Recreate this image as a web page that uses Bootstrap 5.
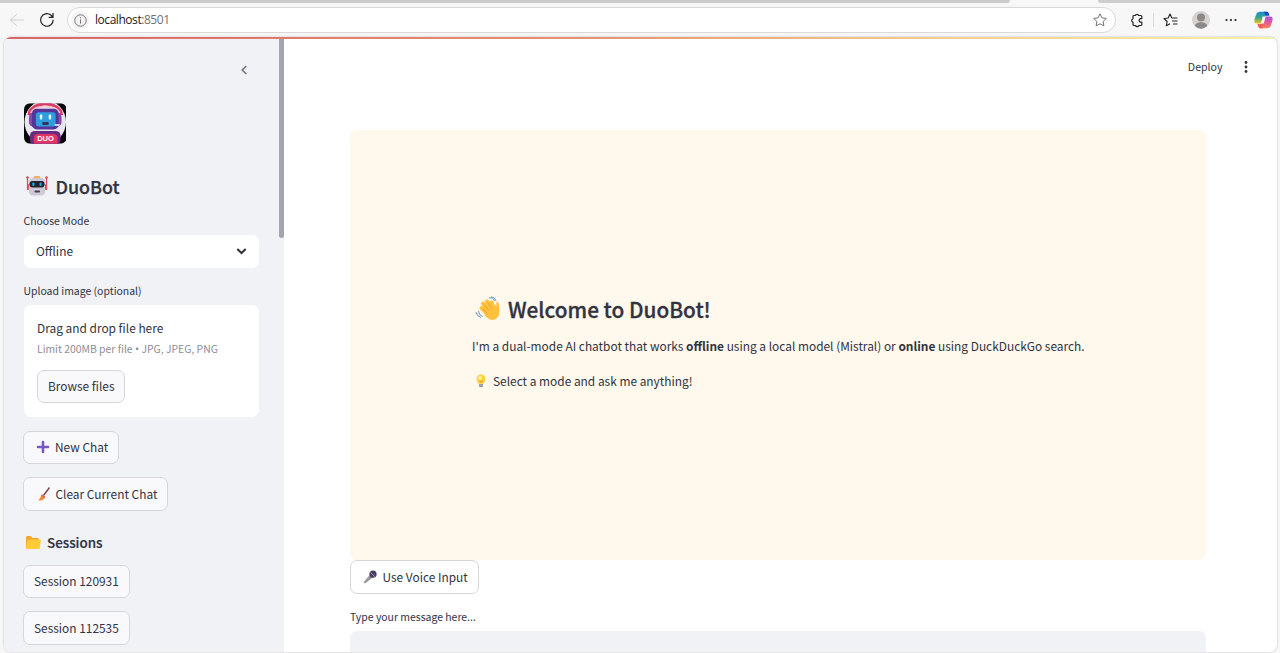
<!DOCTYPE html>
<html lang="en">
<head>
<meta charset="utf-8">
<meta name="viewport" content="width=device-width, initial-scale=1">
<title>DuoBot</title>
<link href="https://cdn.jsdelivr.net/npm/bootstrap@5.3.0/dist/css/bootstrap.min.css" rel="stylesheet">
<script src="https://cdn.jsdelivr.net/npm/bootstrap@5.3.0/dist/js/bootstrap.bundle.min.js" defer></script>
<style>
  body { height: 653px; background: #f7f7f7; color: #31333f; font-family: "Noto Sans CJK SC", sans-serif; font-size: 11.9px; line-height: 20px; }
  svg { display: block; flex: none; }
  .tabstrip { height: 3px; background: #f7f7f7; }
  .tab-rest { background: #cdcdcd; }
  .tab-left { width: 1010px; border-bottom-right-radius: 3px; }
  .tab-right { margin-left: 88px; border-bottom-left-radius: 3px; }
  .toolbar { height: 34px; }
  .address { width: 1049px; height: 26px; border: 1px solid #d9d9d9; margin-left: 12px; padding: 0 8px 0 3px; font: 12px/24px "Open Sans", sans-serif; letter-spacing: -.45px; color: #1b1b1b; }
  .info-dot { width: 18px; height: 18px; background: #f3f3f3; }
  .address-text { margin-left: 6px; }
  .port { color: #717171; }
  .viewport { height: 615px; margin: 0 3px 0 4px; border-radius: 7px; box-shadow: 0 0 2px #b4b4b4; }
  .page-frame { height: 615px; }
  .rainbow { height: 2px; background: linear-gradient(90deg, #d9666a, #e8906e 45%, #f3cf94 75%, #f4f0a8); }
  .sidebar { width: 280px; background: #f0f2f6; padding: 0 25px 0 19.5px; }
  .scroll-thumb { top: 0; right: 0; width: 5px; height: 199px; background: #a3a4ad; border-radius: 0 0 3px 3px; }
  .side-top { height: 64px; padding: 23px 9px 0 0; }
  .title { font-weight: 500; font-size: 17.9px; line-height: 26px; margin-top: 28.5px; gap: 7.5px; padding-left: 2.5px; -webkit-text-stroke: .25px #31333f; }
  .label-text { font-size: 10.45px; line-height: 16px; }
  .select-box { height: 33px; border-radius: 7px; padding: 0 11px 0 12.5px; }
  .uploader { height: 112px; border-radius: 7px; padding: 13.5px 13.5px; }
  .hint { font-size: 10.4px; line-height: 18px; color: #8d8e95; margin-top: 2px; }
  .bullet { font-family: "Open Sans", sans-serif; font-size: 11px; }
  .btn-st { --bs-btn-padding-x: 10px; --bs-btn-padding-y: 0; --bs-btn-font-size: 11.9px; --bs-btn-line-height: 20px; --bs-btn-color: #31333f; --bs-btn-bg: #f9f9fb; --bs-btn-border-color: #d5d6dc; --bs-btn-border-radius: 7px; height: 33.5px; display: inline-flex; align-items: center; white-space: nowrap; }
  .side-buttons { margin-left: -.5px; gap: 13px; }
  .sessions { font-weight: 500; font-size: 13.4px; line-height: 20px; gap: 5.5px; padding-left: 1px; margin: 21.5px 0 12.5px; -webkit-text-stroke: .2px #31333f; }
  .deploy { height: 91px; padding: 17px 25px 0 0; gap: 17.5px; font-size: 10.6px; }
  .content { width: 856px; margin-left: 66px; }
  .welcome { height: 430px; background: #fff8ec; border-radius: 7px; padding: 0 0 4px 122px; }
  .welcome-title { font-weight: 500; font-size: 20.8px; line-height: 30px; gap: 8px; padding-left: 4px; margin: -1px 0 12.5px -1px; -webkit-text-stroke: .3px #31333f; }
  .message { height: 30px; background: #f0f2f6; border-radius: 7px 7px 0 0; }
  b { font-weight: 700; }
</style>
</head>
<body class="overflow-hidden">
<header>
  <div class="tabstrip d-flex"><div class="tab-rest tab-left"></div><div class="tab-rest tab-right flex-grow-1"></div></div>
  <div class="toolbar d-flex align-items-center">
    <svg width="16" height="14" viewBox="0 0 16 14" style="margin-left:9px" fill="none" stroke="#cfcfcf"><path d="M8 1 1.500 7 8 13M1.500 7H15"/></svg>
    <svg width="16" height="16" viewBox="0 0 16 16" style="margin-left:14px" fill="none" stroke="#222" stroke-width="1.200"><path d="M14.200 7.800A6.300 6.300 0 1 1 11.800 3l2 2M14 1v4.300H9.700"/></svg>
    <div class="address bg-white rounded-pill d-flex align-items-center">
      <span class="info-dot rounded-circle d-flex align-items-center justify-content-center"><svg width="13" height="13" viewBox="0 0 13 13" fill="none" stroke="#777"><circle cx="6.500" cy="6.500" r="5.700"/><path d="M6.500 5.600v4M6.500 3.300v1.200"/></svg></span>
      <span class="address-text">localhost<span class="port">:8501</span></span>
      <svg class="ms-auto" width="14" height="14" viewBox="0 0 14 14" fill="none" stroke="#737373" stroke-linejoin="round"><path d="m7 .8 1.900 4 4.400.6-3.200 3.100.8 4.400L7 10.800l-3.900 2.100.8-4.400L.7 5.400l4.400-.6z"/></svg>
    </div>
    <svg width="14" height="15" viewBox="0 0 14 15" style="margin-left:14px" fill="none" stroke="#222" stroke-width="1.200" stroke-linejoin="round"><path d="M3.500 2.500h1.800a1.800 1.800 0 0 1 3.400 0h2.100q1 0 1 1v2.200h-1a1.700 1.700 0 0 0 0 3.400h1v2.400q0 1-1 1H8.900a1.800 1.800 0 0 1-3.400 0H4q-1 0-1-1V9.300a1.900 1.900 0 0 1 0-3.600V3.500q0-1 1-1"/></svg>
    <span style="width:1px;height:14px;margin-left:9px;background:#dadada"></span>
    <svg width="16" height="14" viewBox="0 0 16 14" style="margin-left:9px" fill="none" stroke="#222" stroke-width="1.100" stroke-linejoin="round"><path d="M8.800 5 7 1 5.200 5 1 5.500l3.100 3-.8 4.300L7 10.700M8.700 5H14.500M9 8h5.500M10 11h4.500"/></svg>
    <svg width="18" height="18" viewBox="0 0 18 18" style="margin-left:13px"><circle cx="9" cy="9" r="9" fill="#d5d2d0"/><circle cx="9" cy="6.500" r="4" fill="#8b8886"/><path d="M3 15c0-5 12-5 12 0Q9 20.500 3 15" fill="#8b8886"/></svg>
    <svg width="12" height="4" viewBox="0 0 12 4" style="margin-left:15px" fill="#222"><circle cx="1.500" cy="2" r="1.100"/><circle cx="6" cy="2" r="1.100"/><circle cx="10.500" cy="2" r="1.100"/></svg>
    <svg width="19" height="18" viewBox="0 0 19 18" style="margin-left:17px">
      <defs><linearGradient id="ca" x2="0" y2="1"><stop stop-color="#168bd8"/><stop offset=".5" stop-color="#39a884"/><stop offset="1" stop-color="#f2c515"/></linearGradient><linearGradient id="cb" x2="0" y2="1"><stop stop-color="#a458de"/><stop offset=".5" stop-color="#e5549a"/><stop offset="1" stop-color="#f98650"/></linearGradient></defs>
      <path d="M6 .8h7L9 12.500H3c-4 0-2.700-3.500-1-8.500C2.800 1.600 4 .8 6 .8" fill="url(#ca)"/><path d="M10 .8h3c1.300 0 1.800 1.600 2.500 4h-4z" fill="#1549c5"/>
      <path d="M13 17.200H6L10 5.500h6c4 0 2.700 3.500 1 8.500-.8 2.400-2 3.200-4 3.200" fill="url(#cb)"/><path d="M9 17.200H6c-1.300 0-1.800-1.600-2.500-4.200H8z" fill="#f45c4e"/><path d="M8.700 5.500h2.900l-1.800 7H7z" fill="#fff"/>
    </svg>
  </div>
</header>
<div class="viewport bg-white overflow-hidden">
  <div class="page-frame d-flex flex-column">
    <div class="rainbow flex-shrink-0"></div>
    <div class="d-flex flex-grow-1">
      <aside class="sidebar position-relative flex-shrink-0">
        <div class="scroll-thumb position-absolute"></div>
        <div class="side-top d-flex justify-content-end"><svg width="12" height="16" viewBox="0 0 12 16" fill="none" stroke="#777984" stroke-width="1.700"><path d="M8.300 4 4.300 8l4 4"/></svg></div>
        <svg width="42.500" height="41" viewBox="0 0 43 41">
          <defs><clipPath id="lg"><rect width="43" height="41" rx="6"/></clipPath></defs>
          <g clip-path="url(#lg)"><rect width="43" height="41" fill="#08070b"/><ellipse cx="21.500" cy="19" rx="21" ry="22" fill="#e9e6f1"/>
          <path d="M5 12C6-3 37-3 38 12" fill="none" stroke="#d93b62" stroke-width="3"/><path d="M7 10C10 1 33 1 36 10" fill="none" stroke="#f9c9d4" stroke-width="2"/>
          <rect x="5" y="9" width="33" height="15" rx="5" fill="#8a4ba4"/><rect x="8" y="5.500" width="27" height="21" rx="5" fill="#56359a"/>
          <rect x="12" y="9" width="20" height="14.500" rx="3" fill="#2f9ede"/><rect x="16" y="11.500" width="2.500" height="5" rx="1" fill="#e8fbff"/><rect x="25" y="11.500" width="2.500" height="5" rx="1" fill="#e8fbff"/><rect x="18.500" y="19" width="6.500" height="3" rx="1" fill="#35355c"/><path d="M31 22h5" stroke="#fff" stroke-width="1.500"/>
          <rect x="6" y="28" width="31" height="14" rx="5" fill="#6a2b84"/><path d="M10 41V34q1-3 4-3h16q3 0 4 3v7z" fill="#e33565"/></g>
          <text x="13.300" y="37.800" font-family="Liberation Sans" font-weight="700" font-size="7" textLength="17" lengthAdjust="spacingAndGlyphs" fill="#fff">DUO</text>
        </svg>
        <div class="title d-flex align-items-center">
          <svg width="22" height="22" viewBox="0 0 22 22"><path d="M1.500 2v13M20.500 2v13" stroke="#d94a58" stroke-width="1.300"/><circle cx="1.500" cy="2.500" r="1.300" fill="#e04c55"/><circle cx="20.500" cy="2.500" r="1.300" fill="#e04c55"/><rect x="1" y="9" width="20" height="6" rx="2" fill="#e0525c"/><rect x="7.500" y="1" width="7" height="4" rx="1.500" fill="#f2ae61"/><rect x="3" y="3" width="16" height="17.500" rx="4" fill="#cfc8d8"/><rect x="3.500" y="6" width="15" height="6.500" rx="3" fill="#25212d"/><rect x="6.300" y="7.500" width="2.200" height="3.500" rx="1" fill="#21a9de"/><rect x="13.500" y="7.500" width="2.200" height="3.500" rx="1" fill="#21a9de"/><rect x="8.500" y="15.500" width="5.500" height="2" rx=".7" fill="#453f4a"/></svg>
          <span>DuoBot</span>
        </div>
        <div class="label-text" style="margin-top:14.500px">Choose Mode</div>
        <div class="select-box bg-white d-flex align-items-center justify-content-between" style="margin-top:5.500px"><span>Offline</span><svg width="13" height="12" viewBox="0 0 13 12" fill="none" stroke="#31333f" stroke-width="2"><path d="m2.300 4 4.200 4 4.200-4"/></svg></div>
        <div class="label-text" style="margin-top:15.500px">Upload image (optional)</div>
        <div class="uploader bg-white" style="margin-top:5.500px">
          <div>Drag and drop file here</div>
          <div class="hint">Limit 200MB per file <span class="bullet">•</span> JPG, JPEG, PNG</div>
          <button class="btn btn-st" style="margin-top:11.500px">Browse files</button>
        </div>
        <div class="side-buttons d-flex flex-column align-items-start" style="margin-top:14px">
          <button class="btn btn-st"><svg width="14" height="14" viewBox="0 0 14 14" style="margin:0 5px 0 2px" stroke="#7659c0" stroke-width="2.600" stroke-linecap="round"><path d="M7 2v10M2 7h10"/></svg>New Chat</button>
          <button class="btn btn-st"><svg width="14" height="16" viewBox="0 0 14 16" style="margin:0 4.500px 0 3px"><path d="m6.500 9.500 6-8" stroke="#74464c" stroke-width="1.400"/><path d="M5 8.500 8 10.800Q7.500 15 1.500 14.500 2.500 13 5 8.500" fill="#f48b3a"/><path d="m5 8.500 3 2.300-.4 1.200-3.300-2.400z" fill="#d2584a"/></svg>Clear Current Chat</button>
        </div>
        <div class="sessions d-flex align-items-center"><svg width="17" height="15" viewBox="0 0 17 15"><path d="M1 12V2.500Q1 1 2.500 1h3l2 2h5q1.500 0 1.500 1.500V7z" fill="#f5a52b"/><path d="M2.500 5.500Q3 4.500 4 4.500h10.500q1.500 0 1.300 1.500l-1 7q-.3 1-1.300 1H2q-1.300 0-1.200-1.300z" fill="#ffcb37"/></svg><span>Sessions</span></div>
        <div class="side-buttons d-flex flex-column align-items-start">
          <button class="btn btn-st">Session 120931</button>
          <button class="btn btn-st">Session 112535</button>
        </div>
      </aside>
      <main class="flex-grow-1">
        <div class="deploy d-flex justify-content-end"><span style="padding-top:1px">Deploy</span><svg width="12" height="20" viewBox="0 0 12 20" fill="#31333f"><circle cx="6" cy="6.500" r="1.400"/><circle cx="6" cy="11" r="1.400"/><circle cx="6" cy="15.500" r="1.400"/></svg></div>
        <div class="content">
          <section class="welcome d-flex flex-column justify-content-center">
            <div class="welcome-title d-flex align-items-center">
              <svg width="25" height="25" viewBox="0 0 25 25"><g stroke="#ffc13b" stroke-width="4" stroke-linecap="round"><path d="M8 7.500 15 17M12 5.500 18 15M16.500 6.500 19 14M6.500 12 14 19"/></g><path d="M8 12 18 7.500l3.500 2.500V5.500q2-.5 2.500 3l.3 8q0 6-6.300 7.500-4.500 0-8.500-5z" fill="#ffc13b"/><path d="m9 8.500 5 6M13 7l4 6M8 13l4 4" stroke="#ee9b2f" stroke-width=".8"/><path d="M14 2q4-1 5.500 3M16 .8q4 .2 5 4M3.500 15q.3 4 4 5.500M1 16q1 4.500 5 5.500" fill="none" stroke="#6796c8"/></svg>
              <span>Welcome to DuoBot!</span>
            </div>
            <div class="intro text-nowrap">I'm a dual-mode AI chatbot that works <b>offline</b> using a local model (Mistral) or <b>online</b> using DuckDuckGo search.</div>
            <div class="d-flex align-items-center" style="margin-top:15px"><svg width="14" height="14" viewBox="0 0 14 14" style="margin:0 5px 0 2px"><path d="M2.500 5a4.500 4.500 0 0 1 9 0q0 2-2 4.800h-5Q2.500 7 2.500 5" fill="#fcd13e"/><circle cx="6" cy="4" r="2" fill="#ffec91"/><path d="M5.500 6 7 9l1.500-3" fill="none" stroke="#e99b25" stroke-width=".7"/><path d="M5 10h4v2.500q-2 1.700-4 0z" fill="#a1a0a8"/></svg><span>Select a mode and ask me anything!</span></div>
          </section>
          <button class="btn btn-st bg-white"><svg width="16" height="16" viewBox="0 0 16 16" style="margin:0 4.500px 0 1px"><path d="m8.500 5 3 3-8.500 6.500-1.500-1.300z" fill="#98979d"/><circle cx="11" cy="5.200" r="3.600" fill="#493c63"/><path d="m8.500 3.500 4.500 4.300" stroke="#b18bb9"/></svg>Use Voice Input</button>
          <div class="label-text" style="margin:15.500px 0 6px">Type your message here...</div>
          <div class="message"></div>
        </div>
      </main>
    </div>
  </div>
</div>
</body>
</html>
